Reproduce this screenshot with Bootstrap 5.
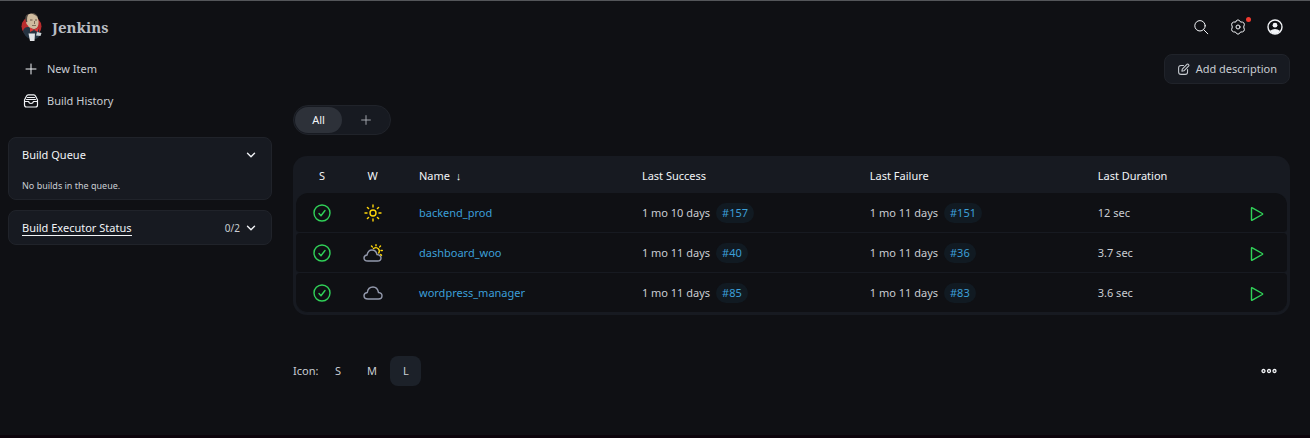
<!DOCTYPE html>
<html lang="en" data-bs-theme="dark">
<head>
<meta charset="utf-8">
<meta name="viewport" content="width=device-width, initial-scale=1">
<title>Dashboard - Jenkins</title>
<link href="https://cdn.jsdelivr.net/npm/bootstrap@5.3.0/dist/css/bootstrap.min.css" rel="stylesheet">
<style>
  :root { --page: #0f1014; --panel: #171a21; --edge: #20232a; --ink: #c9cdd3; --bright: #f2f4f7; --sky: #3c9fd8; --ok: #30d158; }
  body { background: var(--page); color: var(--ink); font: 11px/20px "Noto Sans", "Open Sans", sans-serif; border-top: 1px solid #54565a; border-bottom: 3px solid #0c040b; }
  a { color: inherit; text-decoration: none; }
  svg { display: block; flex: none; fill: none; stroke: currentColor; stroke-linecap: round; stroke-linejoin: round; }
  .topbar { height: 52px; padding: 0 27px 0 20px; }
  .topbar nav { gap: 21px; }
  .butler { stroke: none; }
  .wordmark { font: bold 15px/20px "Noto Serif", "Liberation Serif", serif; color: #b9bdc3; }
  .icon-btn { background: none; border: 0; padding: 0; color: var(--bright); }
  .notice { top: -2px; right: -5px; width: 5px; height: 5px; background: #f03a2f; }
  .side { width: 264px; }
  .side-panes { margin-top: 20px; gap: 10px; }
  .task { height: 32px; padding: 0 15px; gap: 8px; }
  .task svg { color: var(--bright); }
  .pane { background: var(--panel); border: 1px solid var(--edge); border-radius: 8px; padding: 0 13px; }
  .pane-head { height: 33px; color: var(--bright); }
  .pane small { font-size: 9px; color: var(--ink); padding: 5px 0 3px; }
  .count { font-size: 10px; color: var(--ink); }
  .executors { border-bottom: 1px solid var(--bright); line-height: 14px; padding-top: 1px; }
  .content-area { padding: 1px 20px 0 21px; }
  .describe { height: 30px; border: 1px solid var(--edge); border-radius: 8px; background: var(--panel); color: var(--ink); padding: 0 12px; gap: 6px; }
  .views { height: 30px; border: 1px solid var(--edge); border-radius: 15px; background: var(--panel); padding: 1px; margin-top: 21px; }
  .views a { width: 47px; border-radius: 13px; color: #b2b6bd; }
  .views a.current { background: #2d3139; color: var(--bright); }
  .jobs-frame { background: var(--panel); border-radius: 14px; padding: 0 3px 2px; margin-top: 21px; }
  .jobs { table-layout: fixed; border-collapse: separate; border-spacing: 0; }
  .jobs th { height: 37px; padding: 2px 12px 0; font-weight: 400; color: var(--bright); }
  .jobs td { height: 40px; padding: 0 12px; background: var(--page); border-bottom: 1px solid var(--panel); }
  .jobs .center-cell { text-align: center; padding-left: 0; padding-right: 0; }
  .jobs .center-cell svg { margin: auto; }
  .jobs .center-cell button { vertical-align: middle; }
  .jobs .name-cell { padding-left: 22px; }
  .jobs td.name-cell, .build { color: var(--sky); }
  .jobs td:first-child { border-radius: 4px 0 0 4px; }
  .jobs td:last-child { border-radius: 0 4px 4px 0; }
  .jobs tbody tr:first-child td:first-child { border-top-left-radius: 12px; }
  .jobs tbody tr:first-child td:last-child { border-top-right-radius: 12px; }
  .jobs tbody tr:last-child td:first-child { border-bottom-left-radius: 12px; }
  .jobs tbody tr:last-child td:last-child { border-bottom-right-radius: 12px; }
  .c-status { width: 52px; } .c-weather { width: 49px; } .c-name { width: 23.5%; } .c-when { width: 23%; } .c-run { width: 60px; }
  .build { display: inline-block; background: #111a22; border-radius: 10px; padding: 0 6px; margin-left: 6px; }
  .jobs .ok-ink { color: var(--ok); }
  .jobs .sun { color: #ffd60a; }
  .jobs .cloud { color: #9399ac; }
  .sizes { margin-top: 41px; padding-right: 13px; }
  .sizes a { width: 31px; height: 30px; border-radius: 8px; margin-left: 3px; }
  .sizes span { margin-right: 1px; }
  .sizes a.current { background: #1c2129; }
</style>
</head>
<body class="min-vh-100">
<svg width="0" height="0" class="position-absolute" aria-hidden="true">
  <symbol id="plus" viewBox="0 0 16 16"><path d="M8 3v10M3 8h10"/></symbol>
  <symbol id="chevron" viewBox="0 0 16 16"><path d="M4 6l4 4 4-4"/></symbol>
  <symbol id="check" viewBox="0 0 18 18"><circle cx="9" cy="9" r="8"/><path d="M6 9.500l2 2.200 4-5.200"/></symbol>
  <symbol id="run" viewBox="0 0 16 16"><path d="M2.500 2.200v11.600q0 .8.800.4l10-5.700q.8-.5 0-1l-10-5.700q-.8-.4-.8.400z"/></symbol>
</svg>
<header class="topbar d-flex align-items-center justify-content-between">
  <a href="#" class="d-flex align-items-center gap-2">
    <svg class="butler" width="24" height="30" viewBox="0 0 24 30">
      <ellipse cx="11.500" cy="14.500" rx="10" ry="10" fill="#b92c2d"/>
      <path d="M3 19q1-4 5-4l8 0 3 3v7q-3 3-9 2-6-3-7-8z" fill="#263442"/>
      <path d="M6 9Q5 2 11 1.500q6-.5 7 5 1 3 .3 6.500-1 4-4.300 4-4.500 0-6.500-4-1.500-1-1.500-4z" fill="#cfbb9e"/>
      <path d="M6 10Q3.500 3.500 8.500 2 6.500 5 7.300 10zM10.500 1.500q5.500-1.500 7.500 4-3-3.500-7.500-4z" fill="#4d443e"/>
      <path d="M10 7.600h2.500v1H10zM15 7.600h2v1h-2zM14 9h.800v3H14zM12 13.300h4v.8h-4z" fill="#6a5545"/>
      <path d="M10 15.500l4 2 4-2v4.500l-4-2-4 2z" fill="#d73634"/>
      <path d="M8.500 21.500h6.500l-.5 7.500H10z" fill="#e2e4e7"/>
      <path d="M17 20l4.500 1-1 3-4.500-.5z" fill="#cbd4d8"/>
    </svg>
    <span class="wordmark">Jenkins</span>
  </a>
  <nav class="d-flex align-items-center" aria-label="Account">
    <button class="icon-btn" aria-label="Search"><svg width="16" height="16" viewBox="0 0 16 16"><circle cx="7" cy="6.800" r="5.200"/><path d="M10.800 10.800l4 4"/></svg></button>
    <button class="icon-btn position-relative" aria-label="Manage"><svg width="16" height="16" viewBox="0 0 16 16"><path d="M6.500 1.500q1.500-1.400 3 0l1 1.500 2 .1q1.800.5 1.900 2.300L13.700 8l.7 2.600q-.1 1.800-1.900 2.300l-2 .1-1 1.500q-1.500 1.400-3 0l-1-1.500-2-.1q-1.800-.5-1.900-2.300L2.300 8l-.7-2.600q.1-1.800 1.900-2.300l2-.1z"/><circle cx="8" cy="8" r="2"/></svg><span class="notice position-absolute rounded-1"></span></button>
    <button class="icon-btn" aria-label="User"><svg width="16" height="16" viewBox="0 0 16 16"><circle cx="8" cy="8" r="7" stroke-width="1.400"/><circle cx="8" cy="6.200" r="2.400" fill="currentColor" stroke="none"/><path d="M2.800 12q5.200-4 10.400 0Q8 18 2.800 12z" fill="currentColor" stroke="none"/></svg></button>
  </nav>
</header>
<div class="d-flex">
  <aside class="side ms-2 flex-shrink-0">
    <nav aria-label="Tasks">
      <a href="#" class="task d-flex align-items-center"><svg width="16" height="16"><use href="#plus"/></svg>New Item</a>
      <a href="#" class="task d-flex align-items-center"><svg width="16" height="16" viewBox="0 0 16 16" stroke-width="1.200"><path d="M1.500 8V7l2-4q.5-1.200 1.700-1.200h5.600q1.200 0 1.700 1.200l2 4v1M4.500 4.500h7M3.500 6.500h9M1.500 8.500h4q.5 2 2.500 2t2.500-2h4v3.500q0 2-2 2h-9q-2 0-2-2z"/></svg>Build History</a>
    </nav>
    <div class="side-panes d-flex flex-column">
      <section class="pane">
        <div class="pane-head d-flex align-items-center justify-content-between">Build Queue<button class="icon-btn" aria-label="Collapse build queue"><svg width="14" height="14" stroke-width="1.600"><use href="#chevron"/></svg></button></div>
        <small class="d-block">No builds in the queue.</small>
      </section>
      <section class="pane">
        <div class="pane-head d-flex align-items-center"><a href="#" class="executors me-auto">Build Executor Status</a><span class="count me-1">0/2</span><button class="icon-btn" aria-label="Expand executors"><svg width="14" height="14" stroke-width="1.600"><use href="#chevron"/></svg></button></div>
      </section>
    </div>
  </aside>
  <main class="content-area flex-grow-1">
    <div class="d-flex justify-content-end">
      <button class="describe d-flex align-items-center"><svg width="13" height="13" viewBox="0 0 16 16" stroke-width="1.300"><path d="M8 3H5Q2 3 2 6v5q0 3 3 3h5q3 0 3-3V8M6 10l.5-2.500 6-6q1-.5 1.800.4.800.8.2 1.700l-6 6z"/></svg>Add description</button>
    </div>
    <div class="d-flex">
      <nav class="views d-flex" aria-label="Views">
        <a href="#" class="current d-flex align-items-center justify-content-center">All</a>
        <a href="#" class="d-flex align-items-center justify-content-center" aria-label="New view"><svg width="14" height="14"><use href="#plus"/></svg></a>
      </nav>
    </div>
    <div class="jobs-frame">
      <table class="jobs w-100">
        <colgroup><col class="c-status"><col class="c-weather"><col class="c-name"><col class="c-when"><col class="c-when"><col><col class="c-run"></colgroup>
        <thead><tr><th class="center-cell">S</th><th class="center-cell">W</th><th class="name-cell">Name &nbsp;↓</th><th>Last Success</th><th>Last Failure</th><th>Last Duration</th><th></th></tr></thead>
        <tbody>
          <tr>
            <td class="center-cell ok-ink"><svg width="18" height="18" stroke-width="1.400"><use href="#check"/></svg></td>
            <td class="center-cell sun"><svg width="18" height="18" viewBox="0 0 18 18" stroke-width="1.400"><circle cx="9" cy="9" r="3"/><path d="M9 1v2M9 15v2M1 9h2M15 9h2M3.400 3.400l1.200 1.200M13.400 13.400l1.200 1.200M3.400 14.600l1.200-1.200M13.400 4.600l1.200-1.200"/></svg></td>
            <td class="name-cell"><a href="#">backend_prod</a></td>
            <td>1 mo 10 days<a href="#" class="build">#157</a></td>
            <td>1 mo 11 days<a href="#" class="build">#151</a></td>
            <td>12 sec</td>
            <td class="center-cell"><button class="icon-btn ok-ink" aria-label="Build backend_prod"><svg width="16" height="16" stroke-width="1.400"><use href="#run"/></svg></button></td>
          </tr>
          <tr>
            <td class="center-cell ok-ink"><svg width="18" height="18" stroke-width="1.400"><use href="#check"/></svg></td>
            <td class="center-cell cloud"><svg width="20" height="18" viewBox="0 0 20 18" stroke-width="1.400"><path d="M5 17q-4 0-4-3 0-2.600 3-3Q5 6 9 6t5 4.500q4 .5 4 3.500 0 3-3.500 3z"/><path stroke="#ffd60a" d="M10.500 4.500q3-2 5 .5 1.500 2 .2 4M13 .7v1M8.500 2l.8.900M17.500 2l-.8.900M19.300 6.500H18M17.700 10.500l.8.800"/></svg></td>
            <td class="name-cell"><a href="#">dashboard_woo</a></td>
            <td>1 mo 11 days<a href="#" class="build">#40</a></td>
            <td>1 mo 11 days<a href="#" class="build">#36</a></td>
            <td>3.7 sec</td>
            <td class="center-cell"><button class="icon-btn ok-ink" aria-label="Build dashboard_woo"><svg width="16" height="16" stroke-width="1.400"><use href="#run"/></svg></button></td>
          </tr>
          <tr>
            <td class="center-cell ok-ink"><svg width="18" height="18" stroke-width="1.400"><use href="#check"/></svg></td>
            <td class="center-cell cloud"><svg width="20" height="16" viewBox="0 0 20 16" stroke-width="1.400"><path d="M5 14q-4 0-4-3.200 0-2.800 3.300-3.300Q5 2 10 2q4.500 0 5.500 5.500 3.500.5 3.500 3.300Q19 14 15.500 14z"/></svg></td>
            <td class="name-cell"><a href="#">wordpress_manager</a></td>
            <td>1 mo 11 days<a href="#" class="build">#85</a></td>
            <td>1 mo 11 days<a href="#" class="build">#83</a></td>
            <td>3.6 sec</td>
            <td class="center-cell"><button class="icon-btn ok-ink" aria-label="Build wordpress_manager"><svg width="16" height="16" stroke-width="1.400"><use href="#run"/></svg></button></td>
          </tr>
        </tbody>
      </table>
    </div>
    <div class="sizes d-flex align-items-center">
      <span>Icon:</span>
      <a href="#" class="d-flex align-items-center justify-content-center">S</a>
      <a href="#" class="d-flex align-items-center justify-content-center">M</a>
      <a href="#" class="current d-flex align-items-center justify-content-center">L</a>
      <button class="icon-btn ms-auto" aria-label="More"><svg width="16" height="6" viewBox="0 0 16 6" stroke-width="1.300"><circle cx="2.500" cy="3" r="1.500"/><circle cx="8" cy="3" r="1.500"/><circle cx="13.500" cy="3" r="1.500"/></svg></button>
    </div>
  </main>
</div>
<script src="https://cdn.jsdelivr.net/npm/bootstrap@5.3.0/dist/js/bootstrap.bundle.min.js"></script>
</body>
</html>
